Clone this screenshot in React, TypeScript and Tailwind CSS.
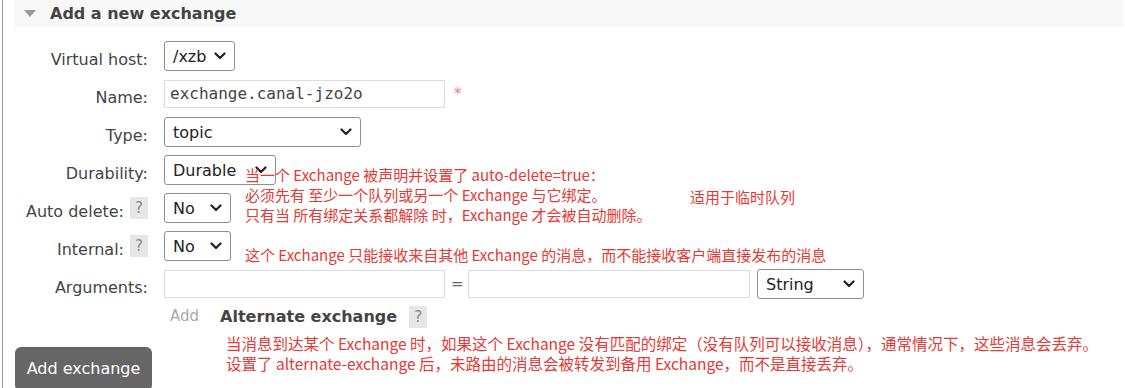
import React from "react";

const Chevron = () => (
  <svg width="12" height="8" viewBox="0 0 12 8" className="absolute right-2 top-1/2 -translate-y-1/2 pointer-events-none">
    <path d="M1.5 1.5 L6 6 L10.5 1.5" fill="none" stroke="#222" strokeWidth="2.2" strokeLinecap="round" strokeLinejoin="round" />
  </svg>
);

function Select({ value, w }: { value: string; w: string }) {
  return (
    <div className={`relative h-[30px] ${w} rounded-[3px] border border-[#8f8f8f] bg-white`}>
      <span className="absolute left-[8px] top-[3px] text-[16px] text-[#222]">{value}</span>
      <Chevron />
    </div>
  );
}

const Help = () => (
  <span className="inline-flex h-[22px] w-[18px] items-center justify-center bg-[#e6e6e6] text-[15px] text-[#888]">?</span>
);

function Row({ label, help, children }: { label: string; help?: boolean; children: React.ReactNode }) {
  return (
    <div className="flex h-[38px] items-center">
      <div className="flex w-[148px] items-center justify-end gap-[6px] text-[16px] text-[#444]">
        <span className="pt-[7px]">{label}</span>
        {help && <Help />}
      </div>
      <div className="ml-[16px] flex items-center">{children}</div>
    </div>
  );
}

const inputCls = "h-[28px] border border-[#dcdcdc] bg-white";

export default function App() {
  return (
    <div className="relative h-[388px] w-[1125px] overflow-hidden bg-white font-['DejaVu_Sans',sans-serif]">
      <div className="absolute left-[2px] top-0 h-full w-px bg-[#9a9a9a]" />
      <div className="ml-[14px] mr-px flex h-[27px] items-center bg-[#f8f8f8]">
        <svg width="12" height="8" viewBox="0 0 12 8" className="ml-[10px]">
          <path d="M0 0 H12 L6 7 Z" fill="#999" />
        </svg>
        <span className="ml-[14px] text-[16px] font-bold text-[#444]">Add a new exchange</span>
      </div>

      <div className="mt-[10px]">
        <Row label="Virtual host:">
          <Select value="/xzb" w="w-[71px]" />
        </Row>
        <Row label="Name:">
          <div className={`${inputCls} w-[281px] pl-[5px] font-['DejaVu_Sans_Mono',monospace] text-[16px] leading-[26px] text-[#444]`}>
            exchange.canal-jzo2o
          </div>
          <span className="ml-[9px] text-[15px] text-[#f08080]">*</span>
        </Row>
        <Row label="Type:">
          <Select value="topic" w="w-[197px]" />
        </Row>
        <Row label="Durability:">
          <Select value="Durable" w="w-[112px]" />
        </Row>
        <Row label="Auto delete:" help>
          <Select value="No" w="w-[67px]" />
        </Row>
        <Row label="Internal:" help>
          <Select value="No" w="w-[67px]" />
        </Row>
        <Row label="Arguments:">
          <div className={`${inputCls} w-[281px]`} />
          <span className="mx-[6px] w-[11px] text-center text-[15px] text-[#666]">=</span>
          <div className={`${inputCls} w-[282px]`} />
          <div className="ml-[7px]">
            <Select value="String" w="w-[107px]" />
          </div>
        </Row>
        <div className="flex h-[27px] items-center pl-[170px]">
          <span className="text-[15px] text-[#aaa]">Add</span>
          <span className="ml-[21px] text-[16px] font-bold text-[#444]">Alternate exchange</span>
          <span className="ml-[12px]">
            <Help />
          </span>
        </div>
        <button className="ml-[15px] mt-[17px] h-[44px] w-[137px] rounded-[6px] bg-[#666] text-[16px] text-white">
          Add exchange
        </button>
      </div>

      <div className="absolute left-[245px] top-[165px] text-[15px] leading-[20px] text-[#e53935] font-['Noto_Sans_CJK_SC',sans-serif]">
        <div>当一个 Exchange 被声明并设置了 auto-delete=true：</div>
        <div>必须先有 至少一个队列或另一个 Exchange 与它绑定。</div>
        <div>只有当 所有绑定关系都解除 时，Exchange 才会被自动删除。</div>
      </div>
      <div className="absolute left-[690px] top-[187px] text-[15px] leading-[20px] text-[#e53935] font-['Noto_Sans_CJK_SC',sans-serif]">
        适用于临时队列
      </div>
      <div className="absolute left-[245px] top-[245px] text-[15px] leading-[20px] text-[#e53935] font-['Noto_Sans_CJK_SC',sans-serif]">
        这个 Exchange 只能接收来自其他 Exchange 的消息，而不能接收客户端直接发布的消息
      </div>
      <div className="absolute left-[226px] top-[333px] text-[15.5px] leading-[20px] text-[#e53935] font-['Noto_Sans_CJK_SC',sans-serif]">
        <div>当消息到达某个 Exchange 时，如果这个 Exchange 没有匹配的绑定（没有队列可以接收消息），通常情况下，这些消息会丢弃。</div>
        <div>设置了 alternate-exchange 后，未路由的消息会被转发到备用 Exchange，而不是直接丢弃。</div>
      </div>
    </div>
  );
}
